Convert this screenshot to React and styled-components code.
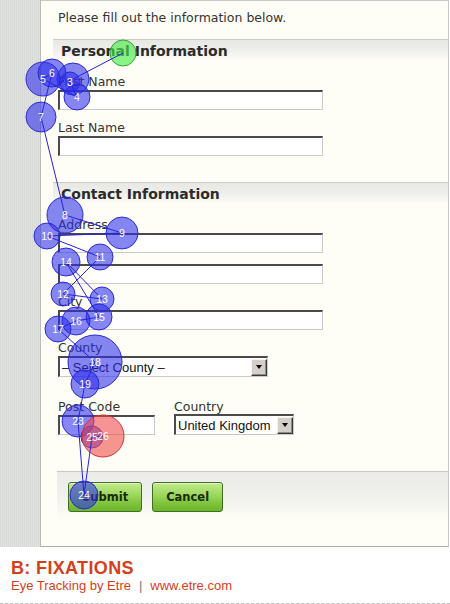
import React from 'react';
import styled, { createGlobalStyle } from 'styled-components';

const Global = createGlobalStyle`
  html, body { margin: 0; padding: 0; background: #fff; }
  body { font-family: "DejaVu Sans", Verdana, sans-serif; color: #2a2a2a; }
`;

const Page = styled.div`
  position: relative;
  width: 450px;
  height: 604px;
  overflow: hidden;
  background: #fff;
  display: flex;
  flex-direction: column;
`;

const Stage = styled.div`
  display: flex;
  height: 547px;
  flex: none;
`;

const Strip = styled.div`
  width: 40px;
  flex: none;
  border-right: 1px solid #b9bbb9;
  background-color: #dcdedc;
  background-image: repeating-linear-gradient(90deg, #d7d9d7 0 1px, #e1e3e1 1px 2px);
`;

const Panel = styled.main`
  flex: 1;
  margin-right: 1px;
  background: #fffef6;
  border-top: 1px solid #c9c9c4;
  border-right: 1px solid #c9c9c4;
  border-bottom: 1px solid #aeaea8;
  display: flex;
  flex-direction: column;
`;

const Intro = styled.p`
  margin: 9px 0 0 17px;
  font-size: 12.5px;
  line-height: 15px;
  color: #333;
`;

const Section = styled.section`
  margin-top: ${p => p.$top}px;
`;

const SectionHeader = styled.h2`
  margin: 0 0 0 12px;
  height: 23px;
  box-sizing: border-box;
  border-top: 1px solid #cbcbc6;
  background: linear-gradient(#e7e7e4, #efefeb 45%, #fffef6);
  padding-left: 8px;
  font-size: 14px;
  font-weight: bold;
  line-height: 22px;
  color: #2b2b2b;
`;

const Body = styled.div`
  padding: 12px 0 0 17px;
  display: flex;
  flex-direction: column;
`;

const Field = styled.div`
  display: flex;
  flex-direction: column;
  margin-top: ${p => p.$top || 0}px;
`;

const Label = styled.label`
  display: block;
  font-size: 12.5px;
  line-height: 16px;
  color: #333;
`;

const TextBox = styled.div`
  width: ${p => p.$w}px;
  height: 20px;
  box-sizing: border-box;
  background: #fff;
  border-top: 2px solid #4a4a4a;
  border-left: 2px solid #4a4a4a;
  border-right: 1px solid #cacaca;
  border-bottom: 1px solid #cacaca;
  margin-top: ${p => p.$top || 0}px;
`;

const SelectBox = styled.div`
  width: ${p => p.$w}px;
  height: 21px;
  box-sizing: border-box;
  background: #fff;
  border-top: 2px solid #4a4a4a;
  border-left: 2px solid #4a4a4a;
  border-right: 1px solid #cacaca;
  border-bottom: 1px solid #cacaca;
  display: flex;
  align-items: center;
  justify-content: space-between;
  font-family: "Liberation Sans", Arial, sans-serif;
  font-size: 13px;
  color: #111;
  margin-top: ${p => p.$top || 0}px;
`;

const SelectText = styled.span`
  padding-left: 2px;
  line-height: 17px;
  white-space: nowrap;
`;

const ArrowBtn = styled.span`
  width: 16px;
  height: 17px;
  box-sizing: border-box;
  flex: none;
  background: #d4d0c8;
  border-style: solid;
  border-width: 1px;
  border-color: #f4f4f0 #3a3a3a #3a3a3a #f4f4f0;
  box-shadow: inset -1px -1px 0 #8a8a86;
  display: flex;
  align-items: center;
  justify-content: center;
  &::after {
    content: "";
    width: 0;
    height: 0;
    border-left: 3.5px solid transparent;
    border-right: 3.5px solid transparent;
    border-top: 4px solid #000;
  }
`;

const Row = styled.div`
  display: flex;
  gap: 19px;
  margin-top: ${p => p.$top}px;
`;

const ButtonBar = styled.div`
  margin: ${p => p.$top}px 0 0 16px;
  border-top: 1px solid #c9c9c4;
  background: linear-gradient(#ebebe8, #efefeb 40%, #fffef6 100%);
  height: 40px;
  padding: 10px 0 0 11px;
  display: flex;
  gap: 10px;
  align-items: flex-start;
`;

const Button = styled.button`
  height: 30px;
  padding: 0 13px;
  border: 1px solid #3f6d22;
  border-radius: 3px;
  background: linear-gradient(#c2ea8c, #9ad65a 45%, #7cc23a 75%, #6cb52c);
  box-shadow: inset 0 1px 0 rgba(255, 255, 255, 0.55);
  font-family: "DejaVu Sans", Verdana, sans-serif;
  font-weight: bold;
  font-size: 11.5px;
  color: #1b2a10;
  cursor: pointer;
`;

const Footer = styled.footer`
  flex: 1;
  box-sizing: border-box;
  padding: 11px 0 0 11px;
  border-bottom: 1px dashed #bdbdbd;
  font-family: "Liberation Sans", Arial, sans-serif;
  color: #d5401a;
`;

const Brand = styled.div`
  font-size: 18px;
  font-weight: bold;
  line-height: 20px;
  letter-spacing: 0.35px;
`;

const Tagline = styled.div`
  font-size: 13px;
  line-height: 15px;
  white-space: nowrap;
`;

const Sep = styled.span`
  color: #777;
  margin: 0 8px;
`;

const Overlay = styled.svg`
  position: absolute;
  left: 0;
  top: 0;
  pointer-events: none;
`;

const fixations = [
  { n: 1, x: 123, y: 53, r: 13, kind: 'green', hide: true },
  { n: 2, x: 73, y: 79, r: 16, hide: true },
  { n: 3, x: 70, y: 82, r: 10 },
  { n: 4, x: 77, y: 97, r: 13 },
  { n: 5, x: 43, y: 79, r: 17 },
  { n: 6, x: 52, y: 73, r: 14 },
  { n: 7, x: 41, y: 117, r: 15 },
  { n: 8, x: 65, y: 215, r: 18 },
  { n: 9, x: 122, y: 233, r: 16 },
  { n: 10, x: 47, y: 236, r: 13 },
  { n: 11, x: 100, y: 257, r: 13 },
  { n: 12, x: 63, y: 294, r: 12 },
  { n: 13, x: 102, y: 299, r: 12 },
  { n: 14, x: 66, y: 262, r: 14 },
  { n: 15, x: 99, y: 317, r: 13 },
  { n: 16, x: 76, y: 321, r: 14 },
  { n: 17, x: 58, y: 329, r: 13 },
  { n: 18, x: 95, y: 362, r: 27 },
  { n: 19, x: 85, y: 384, r: 14 },
  { n: 23, x: 78, y: 421, r: 16 },
  { n: 24, x: 84, y: 495, r: 14 },
  { n: 25, x: 92, y: 437, r: 11 },
  { n: 26, x: 103, y: 436, r: 21, kind: 'red' },
];

const palette = {
  blue: { fill: 'rgba(45, 45, 235, 0.58)', stroke: '#2a2ad6' },
  green: { fill: 'rgba(70, 235, 70, 0.62)', stroke: '#36a536' },
  red: { fill: 'rgba(240, 70, 70, 0.58)', stroke: '#d03636' },
};

function GazeOverlay() {
  return (
    <Overlay width="450" height="604" viewBox="0 0 450 604">
      {fixations.map(f => {
        const c = palette[f.kind || 'blue'];
        return <circle key={'c' + f.n} cx={f.x} cy={f.y} r={f.r} fill={c.fill} stroke={c.stroke} strokeWidth="1" />;
      })}
      {fixations.slice(1).map((f, i) => {
        const p = fixations[i];
        return <line key={'l' + f.n} x1={p.x} y1={p.y} x2={f.x} y2={f.y} stroke="#2323dc" strokeWidth="1" />;
      })}
      {fixations.filter(f => !f.hide).map(f => (
        <text
          key={'t' + f.n}
          x={f.x}
          y={f.y + 3.5}
          textAnchor="middle"
          fontFamily="Liberation Sans, Arial, sans-serif"
          fontSize="10.5"
          fill="#fff"
        >
          {f.n}
        </text>
      ))}
    </Overlay>
  );
}

export default function App() {
  return (
    <>
      <Global />
      <Page>
        <Stage>
          <Strip />
          <Panel>
            <Intro>Please fill out the information below.</Intro>

            <Section $top={14}>
              <SectionHeader>Personal Information</SectionHeader>
              <Body>
                <Field>
                  <Label>First Name</Label>
                  <TextBox $w={265} />
                </Field>
                <Field $top={10}>
                  <Label>Last Name</Label>
                  <TextBox $w={265} />
                </Field>
              </Body>
            </Section>

            <Section $top={26}>
              <SectionHeader>Contact Information</SectionHeader>
              <Body>
                <Field>
                  <Label>Address</Label>
                  <TextBox $w={265} />
                  <TextBox $w={265} $top={11} />
                </Field>
                <Field $top={10}>
                  <Label>City</Label>
                  <TextBox $w={265} />
                </Field>
                <Field $top={10}>
                  <Label>County</Label>
                  <SelectBox $w={210}>
                    <SelectText>– Select County –</SelectText>
                    <ArrowBtn />
                  </SelectBox>
                </Field>
                <Row $top={22}>
                  <Field>
                    <Label>Post Code</Label>
                    <TextBox $w={97} />
                  </Field>
                  <Field>
                    <Label>Country</Label>
                    <SelectBox $w={120} $top={-1}>
                      <SelectText>United Kingdom</SelectText>
                      <ArrowBtn />
                    </SelectBox>
                  </Field>
                </Row>
              </Body>
            </Section>

            <ButtonBar $top={36}>
              <Button type="button">Submit</Button>
              <Button type="button">Cancel</Button>
            </ButtonBar>
          </Panel>
        </Stage>
        <Footer>
          <Brand>B: FIXATIONS</Brand>
          <Tagline>
            Eye Tracking by Etre<Sep>|</Sep>www.etre.com
          </Tagline>
        </Footer>
        <GazeOverlay />
      </Page>
    </>
  );
}
